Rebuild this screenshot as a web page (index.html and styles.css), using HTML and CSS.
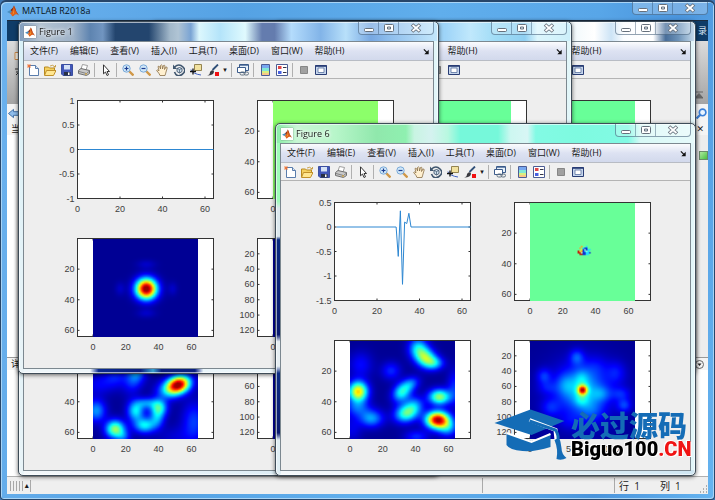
FILE: index.html
```
<!DOCTYPE html>
<html lang="zh-CN">
<head>
    <meta charset="UTF-8">
    <meta name="viewport" content="width=device-width, initial-scale=1.0">
    <title>MATLAB R2018a</title>
    <link rel="stylesheet" href="styles.css">
</head>
<body>

    <!-- ICONS -->
    <svg class="sprite" aria-hidden="true">
        <symbol id="i-matlab" viewBox="0 0 12 12">
            <path d="M0 7l3.500-2L5 6.500 3 8.500z" fill="#4a8fc0"/>
            <path d="M3.500 5Q5.500 4 7 .5L6.500 6 3 8.500 5 6.500z" fill="#7a2a1a"/>
            <path d="M7 .5Q8.500 3 9 6q1 3 3 4.500Q9 8.500 7.500 10 6 12 5 11 4.500 9 3 8.500 5.500 7 7 .5z" fill="#e0601a"/>
            <path d="M7 .5Q8.200 3 9 6l3 4.500Q8 7 7 .5z" fill="#8c2408"/>
            <path d="M7 4q0 4-2 6l2-2z" fill="#f8c040"/>
        </symbol>
        <symbol id="i-new" viewBox="0 0 12 12">
            <path d="M2.500 1.500h6l3 3v7h-9z" fill="#fff" stroke="#5a7dac"/>
            <path d="M8.500 1.500v3h3" fill="#d7e4f4" stroke="#5a7dac"/>
            <path d="M0 2h4M2 0v4M.5.5l3 3M3.500.5l-3 3" stroke="#f07030" stroke-width=".8"/>
        </symbol>
        <symbol id="i-open" viewBox="0 0 12 12">
            <path d="M.5 11V3h4l1 1h5v3" fill="#f4d060" stroke="#b98a20"/>
            <path d="M.5 11.500l2-5h9.500l-2.500 5z" fill="#ffe690" stroke="#c0902a"/>
            <path d="M6 2q3-2 5 1M9.500 3h2V1" fill="none" stroke="#c0902a" stroke-width=".8"/>
        </symbol>
        <symbol id="i-save" viewBox="0 0 12 12">
            <path d="M.5.5h11v11H2l-1.500-1.500z" fill="#4257b8" stroke="#3c50a0"/>
            <path d="M3 1h6v4.500H3z" fill="#d5e2f6"/>
            <path d="M3 8h6.500v3.500H3z" fill="#283044"/>
            <path d="M7 8.500h1.500V11H7z" fill="#fff"/>
        </symbol>
        <symbol id="i-print" viewBox="0 0 12 12">
            <path d="M3 5L4.500.5l5 1L8 6z" fill="#fff" stroke="#888" stroke-width=".8"/>
            <path d="M.5 6.500L3 4.500l8.500 2v3L8.500 11.500.5 9.500z" fill="#c9c9c9" stroke="#707070"/>
            <path d="M1 7.500l7.500 2 3-2.500" fill="none" stroke="#707070" stroke-width=".8"/>
            <path d="M7 10h2" stroke="#d8a020"/>
        </symbol>
        <symbol id="i-arrow" viewBox="0 0 12 12">
            <path d="M3.500.8v9L5.500 8l1.500 3.500 1.500-.7L7 7.500h2.500z" fill="#fff" stroke="#222" stroke-width=".9"/>
        </symbol>
        <symbol id="i-zoomin" viewBox="0 0 12 12">
            <path d="M7 7l4.500 4.500" stroke="#d09848" stroke-width="2.400"/>
            <circle cx="4.500" cy="4.500" r="3.700" fill="#cfe6f8" stroke="#7aaad8"/>
            <path d="M2.500 4.500h4M4.500 2.500v4" stroke="#1c3c90" stroke-width="1.200"/>
        </symbol>
        <symbol id="i-zoomout" viewBox="0 0 12 12">
            <path d="M7 7l4.500 4.500" stroke="#d09848" stroke-width="2.400"/>
            <circle cx="4.500" cy="4.500" r="3.700" fill="#cfe6f8" stroke="#7aaad8"/>
            <path d="M2.500 4.500h4" stroke="#1c3c90" stroke-width="1.200"/>
        </symbol>
        <symbol id="i-pan" viewBox="0 0 12 12">
            <path d="M4 11.500Q3.500 9.500.6 6.500 1 5.200 3 6.800L2 2.500q1-1 1.800.5L4.500 5 4.500 1.500q1-1.300 1.700 0L6.500 5 7.500 1.500q1.200-.8 1.500.5L8.500 5.500l1.500-2.500q1.300-.2 1.200 1L10 8q-.5 2-1 3.500z" fill="#fff0d0" stroke="#8a7048" stroke-width=".8"/>
        </symbol>
        <symbol id="i-rotate" viewBox="0 0 12 12">
            <path d="M1.500 3Q6-1 10 3t-1 7.500T1.500 8" fill="none" stroke="#40566e" stroke-width="1.600"/>
            <path d="M0 .5v4.500h4z" fill="#40566e"/>
            <path d="M4 4.500l2.500-1 2.500 1v3L6.500 9 4 7.500z" fill="#d2e2ee" stroke="#40566e" stroke-width=".9"/>
            <path d="M4 4.500l2.500 1 2.500-1M6.500 5.500V9" fill="none" stroke="#40566e" stroke-width=".7"/>
        </symbol>
        <symbol id="i-datatip" viewBox="0 0 12 12">
            <path d="M4.500.5h7v6h-7z" fill="#f2e2a0" stroke="#948450"/>
            <path d="M1 5.500Q3 10 11 11" fill="none" stroke="#4060c0"/>
            <path d="M0 7.500h6M3 4.500v6" stroke="#111" stroke-width="1.300"/>
        </symbol>
        <symbol id="i-brush" viewBox="0 0 12 12">
            <path d="M11 .5L5.500 6" stroke="#305078" stroke-width="1.800"/>
            <path d="M0 11.500q3-.5 3-3.500 2-3 4-.5 0 4-7 4z" fill="#3a3a40"/>
            <path d="M8 8h4v4H8z" fill="#f01010"/>
        </symbol>
        <symbol id="i-link" viewBox="0 0 12 12">
            <path d="M2.500.5h9v6h-9z" fill="#e6f0fa" stroke="#3c5c8c"/>
            <path d="M.5 3.500h8v5h-8z" fill="#fff" stroke="#3c5c8c"/>
            <path d="M3 1.200h8" stroke="#3c5c8c"/>
            <rect x="3" y="8" width="5" height="3" rx="1.500" fill="none" stroke="#607080"/>
            <rect x="7" y="8" width="4.500" height="3" rx="1.500" fill="none" stroke="#607080"/>
        </symbol>
        <symbol id="i-colorbar" viewBox="0 0 12 12">
            <path d="M3 1h7v3H3z" fill="#78a8f0"/>
            <path d="M3 4h7v3H3z" fill="#80e8d8"/>
            <path d="M3 7h7v2H3z" fill="#d8f080"/>
            <path d="M3 9h7v2H3z" fill="#f8c888"/>
            <path d="M2.500.5h8v11h-8z" fill="none" stroke="#4c5c94"/>
        </symbol>
        <symbol id="i-legend" viewBox="0 0 12 12">
            <path d="M.5.5h11v11H.5z" fill="#fff" stroke="#4c5c94"/>
            <path d="M2 2h3.500v3H2z" fill="#e04848"/>
            <path d="M2 7h3.500v3H2z" fill="#4860e0"/>
            <path d="M7 3.500h3.500M7 8.500h3.500" stroke="#334"/>
        </symbol>
        <symbol id="i-hide" viewBox="0 0 12 12">
            <path d="M2.500 2.500h7v7h-7z" fill="#a0a0a0" stroke="#868686"/>
        </symbol>
        <symbol id="i-show" viewBox="0 0 12 12">
            <path d="M.5 1.500h11v9H.5z" fill="#c6d6ec" stroke="#283c74"/>
            <path d="M.5 2h11" stroke="#283c74" stroke-width="1.600"/>
            <path d="M3 4h6v4.500H3z" fill="#fff" stroke="#5870a0" stroke-width=".8"/>
        </symbol>
        <symbol id="i-min" viewBox="0 0 12 10">
            <rect x="1.500" y="5.500" width="9" height="3" rx="1" fill="#fff" stroke="#66707c"/>
        </symbol>
        <symbol id="i-max" viewBox="0 0 12 10">
            <path d="M2 1h8v8H2z" fill="#fff"/>
            <rect x="1.500" y="1.500" width="9" height="7" rx="1" fill="none" stroke="#66707c"/>
            <path d="M4.500 4h3v2h-3z" fill="#dfeaf4" stroke="#66707c"/>
        </symbol>
        <symbol id="i-close" viewBox="0 0 12 10">
            <path d="M2 1.500l8 7M10 1.500l-8 7" stroke="#66707c" stroke-width="3.600"/>
            <path d="M2.500 2l7 6M9.500 2l-7 6" stroke="#fff" stroke-width="1.800"/>
        </symbol>
        <symbol id="i-dock" viewBox="0 0 8 8">
            <path d="M1 1.500l4 4" stroke="#111" stroke-width="1.400"/>
            <path d="M6.500 2v5h-5z" fill="#111"/>
        </symbol>
    </svg>

    <main class="desktop">

        <!-- MATLAB MAIN WINDOW -->
        <section class="app">
            <header class="app-title">
                <svg class="logo"><use href="#i-matlab"/></svg>
                <h1>MATLAB R2018a</h1>
                <div class="controls">
                    <button aria-label="最小化"><svg><use href="#i-min"/></svg></button>
                    <button aria-label="最大化"><svg><use href="#i-max"/></svg></button>
                    <button class="close" aria-label="关闭"><svg><use href="#i-close"/></svg></button>
                </div>
            </header>
            <div class="app-body">
                <div class="tabs"><a href="#">录</a></div>
                <div class="ribbon">
                    <svg class="ribbon-new" viewBox="0 0 10 26"><path d="M1 1.500h9v7H1z" fill="#f4f0e8" stroke="#c88848"/><path d="M1 18h8M5 15v10M2 21h7M2 24l2-2M7 22l2 2" stroke="#333"/></svg>
                    <svg class="ribbon-pin" viewBox="0 0 8 8"><path d="M0 1h8M4 2.500L8 7H0z" fill="#666" stroke="#666"/></svg>
                </div>
                <div class="address">
                    <svg viewBox="0 0 12 10"><path d="M.5 5L6 .5V3h6v4H6v2.500z" fill="#8fbdec" stroke="#3c6ca4"/></svg>
                    <svg viewBox="0 0 10 10"><circle cx="6" cy="4" r="3" fill="#eaf5ff" stroke="#3a80d8" stroke-width="1.500"/><path d="M4 6L.5 9.500" stroke="#3a80d8" stroke-width="2"/></svg>
                </div>
                <div class="panel-head"><span>当</span><b>✕</b></div>
                <div class="panel-body"><i class="ok"></i></div>
                <div class="panel-head detail">
                    <span>详</span>
                    <svg viewBox="0 0 9 9"><circle cx="4.500" cy="4.500" r="4" fill="#f4f4f4" stroke="#666"/><path d="M2.500 3.500h4l-2 2.500z" fill="#222"/></svg>
                </div>
                <div class="panel-rest"></div>
                <footer class="status">
                    <span class="busy"><i></i><i></i><i></i><i></i><i></i><b>▴</b></span>
                    <span class="message"></span>
                    <span class="message extra"></span>
                    <span class="position"><span>行&nbsp; 1</span><span>列&nbsp; 1</span></span>
                    <svg class="grip" viewBox="0 0 9 9"><path d="M7 1h1M7 4h1M7 7h1M4 4h1M4 7h1M1 7h1" stroke="#999" stroke-width="1.500"/></svg>
                </footer>
            </div>
        </section>

        <!-- FIGURE WINDOWS (filled in by figures.js) -->
        <section class="figure" id="fig3"></section>
        <section class="figure" id="fig2"></section>
        <section class="figure" id="fig4"></section>
        <section class="figure" id="fig1"></section>
        <section class="figure" id="fig6"></section>

        <!-- SITE BADGE -->
        <div class="badge">
            <svg viewBox="0 0 72 52">
                <path d="M12 24v12q3 5 16 6t28-4V25L37 32z" fill="#146cb6"/>
                <path d="M12 24l25 9 19-8" fill="none" stroke="#fff" stroke-width="2"/>
                <path d="M0 14L36 .5 70 12 37 26z" fill="#146cb6"/>
                <path d="M35 11l26 10 1 10" fill="none" stroke="#fff" stroke-width="4"/>
                <path d="M35 12l26 9q4 6 2 12" fill="none" stroke="#146cb6" stroke-width="3"/>
                <path d="M60 31q5-4 6 2l1 6q0 6 5 10-5 3-10 1 2-9-2-19z" fill="#146cb6"/>
            </svg>
            <div class="badge-text">
                <strong>必过源码</strong>
                <em>Biguo100<span>.CN</span></em>
            </div>
        </div>
    </main>

    <script src="figures.js"></script>
</body>
</html>
```
FILE: styles.css
```
* { margin: 0; padding: 0; box-sizing: border-box; }
body {
    background: #3f78b4;
    color: #1a1a1a;
    font-family: "Open Sans", "Noto Sans CJK SC", sans-serif;
    font-size: 9px;
    line-height: 12px;
}
button {
    border: none;
    background: none;
    font: inherit;
    color: inherit;
}
.sprite { position: absolute; width: 0; height: 0; }

.desktop {
    position: relative;
    min-height: 100vh;
    overflow: hidden;
    display: flex;
}

/* Main window */
.app {
    flex: 1;
    display: flex;
    flex-direction: column;
    padding: 0 6px 5px 6px;
    border: 1px solid #27466a;
    border-top-width: 2px;
    border-radius: 6px 6px 4px 4px;
    background: linear-gradient(100deg, #6cb2ee, #55a2e4 30%, #60aeec 55%, #58a6e8 75%, #4a94dc 85%, #66b4f0);
    box-shadow: inset 1px 1px 0 #a8d4f6, inset -1px -1px 0 #a8d4f6;
}
.app-title {
    display: flex;
    align-items: center;
    height: 18px;
}
.logo { width: 12px; height: 12px; }
.app-title h1 {
    flex: 1;
    margin-left: 3px;
    font-size: 9px;
    font-weight: 400;
    color: #0a1420;
}
.controls {
    display: flex;
    align-self: flex-start;
    height: 13px;
    border: 1px solid rgba(40, 70, 100, 0.5);
    border-top: none;
    border-radius: 0 0 4px 4px;
    background: rgba(255, 255, 255, 0.25);
}
.controls button {
    display: flex;
    align-items: center;
    justify-content: center;
    width: 20px;
    border-right: 1px solid rgba(40, 70, 100, 0.4);
}
.controls .close { width: 34px; border-right: none; }
.controls svg { width: 12px; height: 10px; }

.app-body {
    flex: 1;
    display: flex;
    flex-direction: column;
    background: #fff;
    border-top: 1px solid #1b2c40;
}
.tabs {
    height: 20px;
    background: #0f3c68;
    text-align: right;
    line-height: 20px;
}
.tabs a { padding-right: 1px; color: #dce8f4; text-decoration: none; }
.ribbon {
    display: flex;
    justify-content: space-between;
    align-items: flex-end;
    height: 63px;
    padding: 5px;
    background: linear-gradient(#dcdcdc, #a4a4a4);
}
.ribbon-new { width: 10px; height: 26px; align-self: flex-start; margin: 5px 0 0 2px; }
.ribbon-pin { width: 8px; height: 8px; }
.address, .panel-head {
    display: flex;
    justify-content: space-between;
    align-items: center;
    padding: 0 4px;
    background: #f4f4f4;
}
.address { height: 18px; padding: 0 1px; }
.address svg { width: 11px; height: 11px; }
.panel-head { height: 13px; }
.panel-head b { font-family: "DejaVu Sans", sans-serif; }
.panel-head svg { width: 9px; height: 9px; }
.panel-body {
    display: flex;
    justify-content: flex-end;
    height: 222px;
    padding: 16px 1px;
    border-right: 12px solid #ededed;
}
.ok {
    width: 9px;
    height: 9px;
    margin-right: -13px;
    border: 1px solid #6a8a6a;
    background: linear-gradient(135deg, #b0eaa0, #48c040);
}
.detail { border-top: 1px solid #999; }
.panel-rest { flex: 1; }

.status {
    display: flex;
    align-items: center;
    height: 18px;
    border-top: 1px solid #b0b0b0;
    background: #efefef;
    font-size: 10px;
}
.busy { display: flex; align-items: center; gap: 1px; padding: 0 1px 0 3px; border-right: 1px solid #aaa; }
.busy i { width: 1px; height: 10px; margin-right: 1px; background: #a8a8a8; }
.busy b { font-size: 7px; }
.message { flex: 1; height: 15px; border-right: 1px solid #aaa; }
.extra { flex: 0 0 132px; }
.position { display: flex; gap: 20px; width: 84px; padding-left: 4px; }
.grip { width: 9px; height: 9px; align-self: flex-end; }

/* Figure windows */
.figure {
    --title-glass: linear-gradient(#cdeefa, #cdeefa);
    --left-glass: linear-gradient(#d9f1f8, #e9f4f8);
    --bottom-glass: linear-gradient(90deg, #f4f8fa, #cfe6f2);
    position: absolute;
    display: flex;
    flex-direction: column;
    width: 421px;
    min-height: 353px;
    padding: 0 4px 4px 4px;
    border: 1px solid #3e4c58;
    border-radius: 5px;
    background:
        var(--title-glass) 0 0 / 100% 19px no-repeat,
        var(--left-glass) 0 0 / 5px 100% no-repeat,
        var(--bottom-glass) 0 100% / 100% 5px no-repeat,
        #e2f6f9;
    box-shadow: inset 0 0 0 1px rgba(255, 255, 255, 0.6), 0 1px 4px rgba(0, 0, 0, 0.6);
}
#fig1 {
    --title-glass: linear-gradient(90deg, #7f9cbd, #b4c3d2 5%, #9eb2c8 13%, #5e84b0 17%, #7195c0 20%, #23456e 23%, #23456e 31%, #a2b8ca 36%, #b0c4d4 38%, #7aa4d4 41%, #dcf7fd 43%, #b4e4fa 48%, #e0fafe 54%, #647cae 58%, #647cae 61%, #b4dcfc 65%, #82b4e8 72%, #b8e0fa 78%, #78a8e2 84%, #8cbcec 88%, #c4e8fc);
    --bottom-glass: linear-gradient(90deg, #eef6fa 17%, #0a2a90 19%, #0a1e80 29%, #38a0d0 32%, #0a1e80 34%, #0a2080 42%, #eaf5fa 44%, #f0fafc);
    left: 18px;
    top: 21px;
}
#fig2 {
    --title-glass: linear-gradient(90deg, #9ed4f8 70%, #c0e8fc 76%, #a0dcf6 82%, #90d0f2 89%, #dcf6fc 92%, #cceffa);
    left: 151px;
    top: 21px;
}
#fig3 {
    --title-glass: linear-gradient(90deg, #f2f9fc 71%, #fff 76%, #cde4f6 80%, #fbfdff 83%, #fff 90%, #486e9a 93%, #6c92b8 96%, #cadeee);
    left: 275px;
    top: 21px;
}
#fig4 { left: 18px; top: 123px; }
#fig6 {
    --title-glass: linear-gradient(90deg, #86eda6, #c8f6d4 5%, #b8f6ca 14%, #90e8ac 24%, #8ff0b0 31%, #c8f4e2 33%, #d5f2f0 37%, #b8f8e0 41%, #76f8da 44%, #76f8da 53%, #cdf7f1 56%, #d8f6f5 60%, #82fae4 62%, #7efae0 72%, #82fae4 84%, #d8f9f6 87%, #e6fafb);
    --left-glass: linear-gradient(#9dfcb8 22%, #dce8ee 24%, #dce8ee 32%, #0a2a80 33%, #0a1a70 60%, #e6eef2 62%, #e6eef2 69%, #0c2c84 71%, #0a1a70 88%, #e0eef4 90%);
    left: 275px;
    top: 123px;
}

.figure-title {
    display: flex;
    align-items: center;
    height: 19px;
    padding-left: 1px;
}
.figure-title .logo { padding: 1px; background: #fff; box-shadow: 0 0 1px #555; }
.figure-title h2 {
    flex: 1;
    margin-left: 3px;
    font-size: 9px;
    font-weight: 400;
    text-shadow: 0 0 4px #fff, 0 0 4px #fff;
}
.client {
    flex: 1;
    border: 1px solid #7c8890;
    background: #eee;
}
.menu {
    display: flex;
    align-items: center;
    gap: 12px;
    height: 18px;
    padding: 0 3px 0 6px;
    background: linear-gradient(#fbfcfe, #dde2f2 50%, #d2d9ec);
    white-space: nowrap;
}
.menu button { line-height: 16px; }
.menu .dock { display: flex; margin-left: auto; }
.dock svg { width: 7px; height: 7px; }
.toolbar {
    display: flex;
    align-items: center;
    height: 19px;
    border-top: 1px solid #b8bcc4;
    border-bottom: 1px solid #b4b4b4;
    background: #f0f0f0;
}
.toolbar button {
    display: flex;
    justify-content: center;
    width: 17px;
}
.toolbar svg { width: 12px; height: 12px; }
.toolbar .drop { width: 8px; font-family: "DejaVu Sans", sans-serif; font-size: 7px; }
.sep {
    width: 1px;
    height: 14px;
    margin: 0 2px;
    background: #b0b0b0;
}

/* Plots */
.plots {
    display: grid;
    grid-template-columns: 180px 180px;
    grid-auto-rows: 138px;
    padding: 11px 0 0 13px;
}
.plot { display: grid; align-content: start; justify-content: start; }
.plot svg, .plot canvas { grid-area: 1 / 1; }
.plot svg {
    width: 180px;
    height: 126px;
    overflow: visible;
    font-family: "Liberation Sans", sans-serif;
    font-size: 9px;
    fill: #404040;
}
.plot canvas {
    width: 105px;
    height: 98px;
    margin: 11px 0 0 56px;
}
.box { fill: #fff; stroke: #333; }
.tick { stroke: #333; }
.trace { fill: none; stroke: #2d87d2; }
.y-label { text-anchor: end; }
.x-label { text-anchor: middle; }

/* Badge */
.badge {
    position: absolute;
    left: 494px;
    top: 409px;
    display: flex;
    align-items: flex-start;
    gap: 4px;
}
.badge > svg { width: 73px; height: 52px; }
.badge-text { display: flex; flex-direction: column; }
.badge strong {
    font-family: "Noto Sans CJK SC", sans-serif;
    font-size: 29px;
    line-height: 30px;
    font-weight: 900;
    color: #146cb6;
}
.badge em {
    font-family: Roboto, sans-serif;
    font-size: 20px;
    line-height: 20px;
    font-weight: 900;
    font-style: normal;
    color: #000;
    text-shadow: 0 0 1px #fff, 1px 1px 0 #fff, -1px -1px 0 #fff;
}
.badge em span { color: #f01414; }
```
FILE: figures.js
```
const MENUS = ['文件(F)', '编辑(E)', '查看(V)', '插入(I)', '工具(T)', '桌面(D)', '窗口(W)', '帮助(H)'];
const TOOLS = ['new', 'open', 'save', 'print', '|', 'arrow', '|', 'zoomin', 'zoomout', 'pan', 'rotate',
    'datatip', 'brush', 'drop', '|', 'link', '|', 'colorbar', 'legend', '|', 'hide', 'show'];

// axes box inside each plot
const LEFT = 40.5, TOP = 10.5, WIDTH = 136, HEIGHT = 98;

// blobs: x, y, height, sigma x, sigma y, tilt
const SPOT = [[32, 32, 1, 4.4, 4.6, 0], [16, 32, .05, 2, 3, 0], [48, 32, .05, 2, 3, 0], [32, 16, .05, 4, 2, 0], [32, 48, .05, 4, 2, 0]];
const CLOUD4 = [
    [51.5, 28, .95, 5, 3.8, -.4], [45, 32, .2, 5, 4, 0], [25.5, 45, .34, 3.5, 4.5, 0], [39.5, 43, .4, 3.5, 4, 0],
    [31, 54.5, .34, 4.5, 3.5, 0], [38.5, 50.5, .2, 3, 4, 0], [32, 40, .2, 4, 2.5, 0], [13, 57, .5, 4, 4, .6],
    [1.5, 45, .25, 4, 5, 0], [26, 20, .26, 4, 8, .3], [13, 23, .12, 5, 5, 0], [61, 52, .16, 5, 9, 0],
    [3, 28, .09, 6, 5, 0], [50, 62, .06, 8, 5, 0], [18, 62, .15, 3, 3, 0]
];
const CLOUD6 = [
    [45.5, 10.5, .46, 4.5, 4, .7], [41, 4, .3, 4, 4.5, 0], [51, 14, .25, 4, 3, 0], [4.5, 32.5, .64, 4, 4.5, 0],
    [31, 33, .36, 3.5, 4.5, .6], [36.5, 27.500, .2, 4, 3, -.6], [54, 36, .5, 4.5, 3.5, 0], [34, 46.5, .44, 5, 4, -.4],
    [39, 41, .18, 4, 4, 0], [52.8, 51, .92, 4.8, 3.8, 0], [59, 56, .25, 4, 4, 0], [12.5, 50, .26, 5, 4, 0],
    [4, 43, .18, 5, 4, 0], [24.5, 19, .14, 4, 4, 0], [6, 15, .11, 5, 6, 0], [40, 62, .14, 5, 3, 0],
    [63, 30, .14, 3, 8, 0], [1, 57, .08, 4, 6, 0]
];
const STAR = [
    [31.500, 31.500, .62, 2.1, 2.2, 0], [31, 31, .2, 9, 10, 0], [32, 33, .1, 17, 16, 0], [28, 10, .15, 3, 3.5, 0],
    [8, 22.5, .13, 3, 3.5, 0], [10, 30, .07, 4, 3, 0], [12, 43, .1, 4, 4, 0], [57, 41.5, .14, 3, 3, 0],
    [55, 34, .1, 4, 3, 0], [52, 20, .09, 4, 5, 0], [21, 28, .1, 4, 5, 0], [43, 34, .11, 4, 3.5, 0],
    [37, 45, .09, 5, 5, 0], [31, 38, .12, 3, 3, 0], [31, 24, .1, 3, 4, 0], [24, 52, .05, 5, 4, 0], [40, 16, .05, 5, 5, 0]
];
const KERNEL = ['..o..c..', '.o.cbb..', '..ybwbcc', 'ryobcwc.', 'rrwbbccb', '.rrbbcc.'];
const KERNEL_COLORS = { o: '#ffa020', c: '#20e0ff', b: '#1030d0', y: '#f0f020', w: '#a0ffd0', r: '#c02010' };

const FLAT = [[1, 0], [64, 0]];
const PULSE = [[1, 0], [29, 0], [30, -.6], [31, .33], [32, -1.17], [33, .1], [34, .07], [35, .28], [36, 0], [64, 0]];

const FIGURES = {
    1: [{ line: FLAT, min: -1, max: 1 }, { flat: '#8cff6a' }, { blobs: SPOT }, { blobs: [], n: 128 }],
    2: [{ line: FLAT, min: -1, max: 1 }, { flat: '#68ff98' }],
    3: [{ line: FLAT, min: -1, max: 1 }, { flat: '#68ff98' }],
    4: [{ line: FLAT, min: -1, max: 1 }, { flat: '#68ff98' }, { blobs: CLOUD4 }, { blobs: [], n: 128 }],
    6: [{ line: PULSE, min: -1.5, max: .5 }, { flat: '#68ff98', kernel: true }, { blobs: CLOUD6 }, { blobs: STAR, n: 128 }]
};

function jet(v) {
    const c = k => Math.round(255 * Math.max(0, Math.min(1, 1.5 - Math.abs(4 * v - k))));
    return [c(3), c(2), c(1)];
}

function heat(canvas, plot) {
    const ctx = canvas.getContext('2d');
    canvas.width = canvas.height = 64;
    if (plot.flat) {
        ctx.fillStyle = plot.flat;
        ctx.fillRect(0, 0, 64, 64);
        if (plot.kernel) {
            KERNEL.forEach((row, y) => [...row].forEach((ch, x) => {
                if (ch === '.') return;
                ctx.fillStyle = KERNEL_COLORS[ch];
                ctx.fillRect(29 + x, 28 + y, 1, 1);
            }));
        }
        return;
    }
    const img = ctx.createImageData(64, 64);
    for (let y = 0; y < 64; y++) {
        for (let x = 0; x < 64; x++) {
            let v = .02;
            for (const [bx, by, h, sx, sy, a] of plot.blobs) {
                const dx = x - bx, dy = y - by;
                const u = dx * Math.cos(a) + dy * Math.sin(a);
                const w = dy * Math.cos(a) - dx * Math.sin(a);
                v += h * Math.exp(-(u * u / (2 * sx * sx) + w * w / (2 * sy * sy)));
            }
            img.data.set([...jet(Math.min(v, .97)), 255], (y * 64 + x) * 4);
        }
    }
    ctx.putImageData(img, 0, 0);
}

function axes(plot) {
    let svg = `<rect class="box" x="${LEFT}" y="${TOP}" width="${WIDTH}" height="${HEIGHT}"/>`;
    const right = LEFT + WIDTH, bottom = TOP + HEIGHT;
    const xTick = (x, text) => {
        svg += `<path class="tick" d="M${x} ${bottom}v-2M${x} ${TOP}v2"/>`;
        svg += `<text class="x-label" x="${x}" y="${bottom + 13}">${text}</text>`;
    };
    const yTick = (y, text) => {
        svg += `<path class="tick" d="M${LEFT} ${y}h2M${right} ${y}h-2"/>`;
        svg += `<text class="y-label" x="${LEFT - 3}" y="${y + 3}">${text}</text>`;
    };

    if (plot.line) {
        const px = x => LEFT + x / 64 * WIDTH;
        const py = y => TOP + (plot.max - y) / (plot.max - plot.min) * HEIGHT;
        [0, 20, 40, 60].forEach(v => xTick(px(v), v));
        for (let v = plot.min; v <= plot.max; v += .5) yTick(py(v), v);
        svg += `<polyline class="trace" points="${plot.line.map(p => px(p[0]) + ',' + py(p[1])).join(' ')}"/>`;
    } else {
        const n = plot.n || 64;
        (n === 128 ? [0, 50, 100] : [0, 20, 40, 60]).forEach(v => xTick(LEFT + 15.5 + v / n * 105, v));
        for (let v = 20; v < n; v += 20) yTick(TOP + v / n * HEIGHT, v);
    }
    return svg;
}

const use = name => `<svg><use href="#i-${name}"/></svg>`;

function tool(name) {
    if (name === '|') return '<span class="sep"></span>';
    if (name === 'drop') return '<button class="drop" aria-label="drop">▾</button>';
    return `<button aria-label="${name}">${use(name)}</button>`;
}

for (const n in FIGURES) {
    const win = document.getElementById('fig' + n);
    win.innerHTML = `
        <header class="figure-title">
            <svg class="logo"><use href="#i-matlab"/></svg>
            <h2>Figure ${n}</h2>
            <div class="controls">
                <button aria-label="最小化">${use('min')}</button>
                <button aria-label="最大化">${use('max')}</button>
                <button class="close" aria-label="关闭">${use('close')}</button>
            </div>
        </header>
        <div class="client">
            <nav class="menu">${MENUS.map(m => `<button>${m}</button>`).join('')}<button class="dock" aria-label="dock">${use('dock')}</button></nav>
            <div class="toolbar">${TOOLS.map(tool).join('')}</div>
            <div class="plots">${FIGURES[n].map(p => `<div class="plot"><svg>${axes(p)}</svg>${p.line ? '' : '<canvas></canvas>'}</div>`).join('')}</div>
        </div>`;
    const images = FIGURES[n].filter(p => !p.line);
    win.querySelectorAll('canvas').forEach((c, i) => heat(c, images[i]));
}
```
